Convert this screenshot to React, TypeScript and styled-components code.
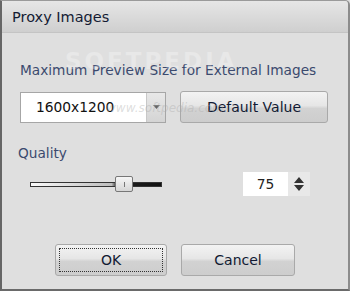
import React from "react";
import styled, { createGlobalStyle } from "styled-components";

const Global = createGlobalStyle`
  html, body { margin: 0; padding: 0; background: #dedede; }
  body { font-family: "DejaVu Sans", "Liberation Sans", sans-serif; }
  * { box-sizing: border-box; }
`;

const Window = styled.div`
  position: relative;
  width: 350px;
  height: 291px;
  background: #dfdfdf;
  border-left: 2px solid #666;
  border-right: 2px solid #8c8c8c;
  border-bottom: 2px solid #6a6a6a;
  border-top: 1px solid #9a9a9a;
  border-top-right-radius: 5px;
  display: flex;
  flex-direction: column;
  overflow: hidden;
`;

const TitleBar = styled.div`
  height: 32px;
  flex: none;
  display: flex;
  align-items: center;
  padding-left: 10px;
  background: linear-gradient(#e6e6e6, #cfcfcf);
  border-bottom: 1px solid #c4c4c4;
  color: #141b33;
  font-size: 14.5px;
`;

const Body = styled.div`
  flex: 1;
  display: flex;
  flex-direction: column;
  padding: 29px 20px 0 16px;
`;

const Label = styled.div<{ $indent?: number; $top?: number }>`
  color: #3b4a6e;
  font-size: 13.7px;
  padding-left: ${(p) => p.$indent ?? 0}px;
  margin-top: ${(p) => p.$top ?? 0}px;
  line-height: 16px;
  white-space: nowrap;
  position: relative;
`;

const Row = styled.div<{ $top: number }>`
  display: flex;
  align-items: center;
  margin-top: ${(p) => p.$top}px;
`;

const Combo = styled.div`
  width: 146px;
  height: 31px;
  margin-left: 2px;
  display: flex;
  background: #fff;
  border: 1px solid #a6a6a6;
`;

const ComboText = styled.div`
  flex: 1;
  display: flex;
  align-items: center;
  padding-left: 15px;
  font-size: 13.8px;
  color: #111;
`;

const ComboArrow = styled.div`
  width: 19px;
  display: flex;
  align-items: center;
  justify-content: center;
  background: linear-gradient(#e8e8e8, #d4d4d4);
  border-left: 1px solid #c8c8c8;
`;

const Button = styled.button<{ $w: number; $ml: number }>`
  width: ${(p) => p.$w}px;
  height: 32px;
  margin-left: ${(p) => p.$ml}px;
  border: 1px solid #a9a9a9;
  border-radius: 3px;
  background: linear-gradient(#f3f3f3 0%, #e6e6e6 45%, #d2d2d2 55%, #cdcdcd 100%);
  font-family: "DejaVu Sans", "Liberation Sans", sans-serif;
  font-size: 14px;
  color: #111a33;
  padding: 0;
  display: flex;
  align-items: center;
  justify-content: center;
  position: relative;
`;

const Focus = styled.span`
  position: absolute;
  inset: 3px;
  border: 1px dotted #333;
`;

const SliderWrap = styled.div`
  position: relative;
  width: 132px;
  height: 16px;
  margin-left: 12px;
  display: flex;
  align-items: center;
`;

const Track = styled.div`
  width: 100%;
  height: 5px;
  border: 1px solid #333;
  background: linear-gradient(90deg, #fafafa 0%, #bdbdbd 62%, #222 66%, #111 100%);
`;

const Thumb = styled.div`
  position: absolute;
  left: 85px;
  top: 0;
  width: 18px;
  height: 16px;
  border: 1px solid #777;
  border-radius: 2px;
  background: linear-gradient(#f6f6f6, #d6d6d6);
  display: flex;
  align-items: center;
  justify-content: center;
  &::after {
    content: "";
    width: 1px;
    height: 5px;
    background: #777;
  }
`;

const Spin = styled.div`
  margin-left: auto;
  margin-right: 18px;
  display: flex;
  height: 24px;
`;

const SpinBox = styled.div`
  width: 45px;
  background: #fff;
  display: flex;
  align-items: center;
  justify-content: center;
  font-size: 13.8px;
  color: #222;
`;

const SpinArrows = styled.div`
  width: 22px;
  background: #e8e8e8;
  display: flex;
  align-items: center;
  justify-content: center;
`;

const Watermark = styled.div`
  position: absolute;
  left: 63px;
  top: 47px;
  font-family: "DejaVu Sans", sans-serif;
  font-weight: bold;
  font-size: 23px;
  color: rgba(255, 255, 255, 0.28);
  letter-spacing: 3px;
  pointer-events: none;
`;

const WatermarkUrl = styled.div`
  position: absolute;
  left: 104px;
  top: 100px;
  font-size: 12px;
  font-style: italic;
  color: rgba(170, 170, 170, 0.4);
  pointer-events: none;
`;

export default function App() {
  return (
    <>
      <Global />
      <Window>
        <TitleBar>Proxy Images</TitleBar>
        <Body>
          <Label $indent={2}>Maximum Preview Size for External Images</Label>
          <Row $top={13}>
            <Combo>
              <ComboText>1600x1200</ComboText>
              <ComboArrow>
                <svg width="7" height="4" viewBox="0 0 7 4">
                  <path d="M0 0h7L3.5 4z" fill="#666" />
                </svg>
              </ComboArrow>
            </Combo>
            <Button $w={148} $ml={14}>Default Value</Button>
          </Row>
          <Label $top={22}>Quality</Label>
          <Row $top={11}>
            <SliderWrap>
              <Track />
              <Thumb />
            </SliderWrap>
            <Spin>
              <SpinBox>75</SpinBox>
              <SpinArrows>
                <svg width="10" height="14" viewBox="0 0 10 14">
                  <path d="M5 0L10 6H0z M5 14L10 8H0z" fill="#333" />
                </svg>
              </SpinArrows>
            </Spin>
          </Row>
          <Row $top={48}>
            <Button $w={112} $ml={37}>
              <Focus />
              OK
            </Button>
            <Button $w={114} $ml={14}>Cancel</Button>
          </Row>
        </Body>
        <Watermark>SOFTPEDIA</Watermark>
        <WatermarkUrl>www.softpedia.com</WatermarkUrl>
      </Window>
    </>
  );
}
